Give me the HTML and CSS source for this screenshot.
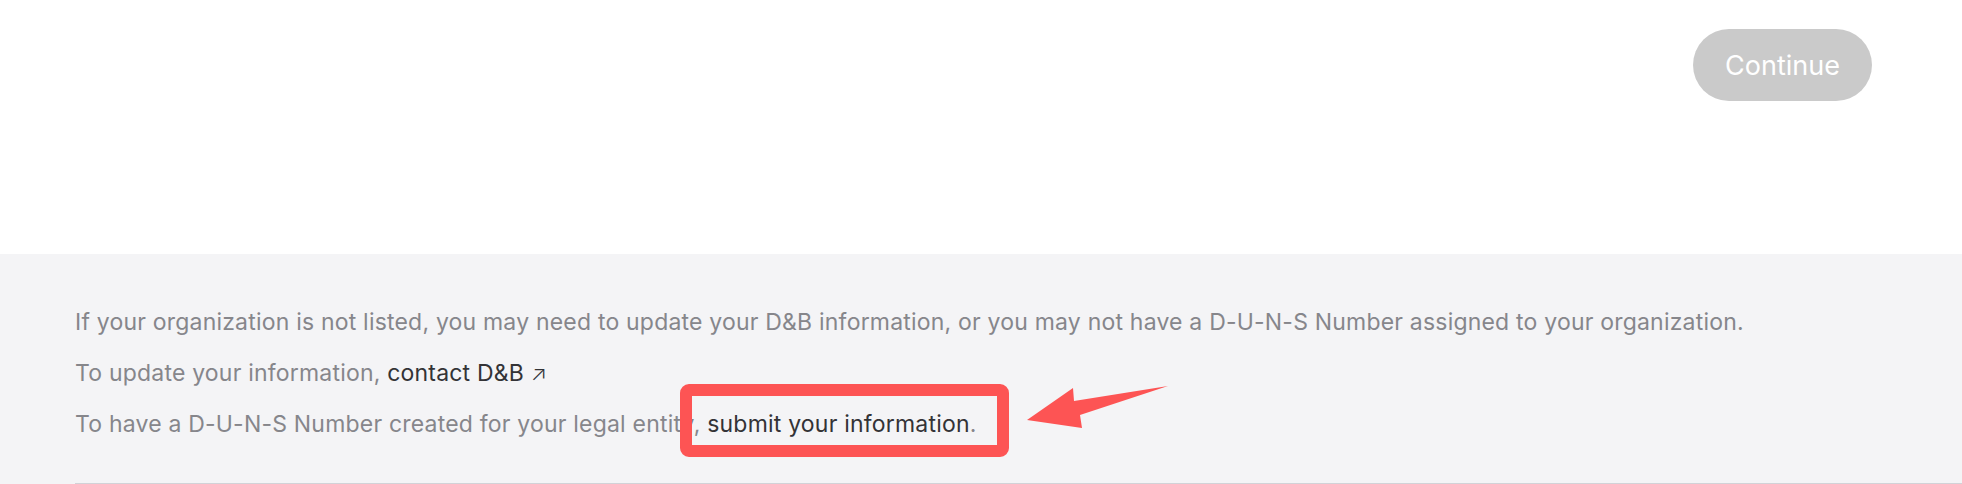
FILE: index.html
```html
<!DOCTYPE html>
<html>
<head>
<meta charset="utf-8">
<link rel="stylesheet" href="styles.css">
</head>
<body>
<div class="page">
  <header class="top">
    <button class="continue" type="button">Continue</button>
  </header>
  <section class="footer">
    <p class="line">If your organization is not listed, you may need to update your D&amp;B information, or you may not have a D-U-N-S Number assigned to your organization.</p>
    <p class="line">To update your information, <a class="link" href="#">contact D&amp;B <span class="ext">↗</span></a></p>
    <p class="line">To have a D-U-N-S Number created for your legal entity, <a class="link" href="#">submit your information</a>.</p>
    <div class="rule"></div>
  </section>
  <svg class="annot" width="1962" height="484" viewBox="0 0 1962 484">
    <rect x="686" y="390" width="317" height="61" rx="3" fill="none" stroke="#fd5454" stroke-width="12"/>
    <polygon points="1027,420 1073,388 1074,401 1168,386 1080,415 1082,428" fill="#fd5454"/>
  </svg>
</div>
</body>
</html>
```
FILE: styles.css
```css
html, body {
  margin: 0;
  padding: 0;
  background: #ffffff;
}
.page {
  position: relative;
  width: 1962px;
  height: 484px;
  overflow: hidden;
  font-family: "Inter", "Liberation Sans", sans-serif;
}
.top {
  height: 254px;
  box-sizing: border-box;
  display: flex;
  justify-content: flex-end;
  align-items: flex-start;
  padding: 29px 90px 0 0;
}
.continue {
  width: 179px;
  height: 72px;
  border: none;
  border-radius: 36px;
  background: #cacaca;
  color: #ffffff;
  font-family: "Inter", "Liberation Sans", sans-serif;
  font-size: 27px;
  font-weight: 400;
  padding: 0;
}
.footer {
  background: #f4f4f6;
  height: 230px;
  box-sizing: border-box;
  padding: 43px 0 0 75px;
}
.line {
  margin: 0;
  font-size: 23px;
  letter-spacing: 0.2px;
  line-height: 51px;
  color: #86868b;
  white-space: nowrap;
}
.link {
  color: #333336;
  text-decoration: none;
}
.ext {
  font-size: 21px;
  font-weight: 300;
}
.rule {
  margin-top: 33px;
  height: 1px;
  background: #d2d2d7;
}
.annot {
  position: absolute;
  left: 0;
  top: 0;
  pointer-events: none;
}
```
